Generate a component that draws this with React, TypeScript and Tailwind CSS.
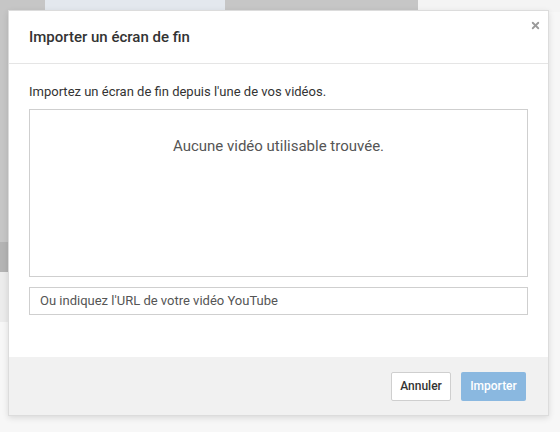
import { X } from "lucide-react";

export default function App() {
  return (
    <div
      className="relative h-[432px] w-[560px] overflow-hidden bg-[#f7f7f7]"
      style={{ fontFamily: "Roboto, 'Liberation Sans', sans-serif" }}
    >
      {/* page behind the overlay */}
      <div className="flex h-[12px]">
        <div className="w-[45px] bg-[#c6c6c6]" />
        <div className="w-[180px] bg-[#e3e8ee]" />
        <div className="w-[193px] bg-[#c6c6c6]" />
        <div className="flex-1 bg-[#f4f4f4]" />
      </div>
      <div className="flex">
        <div className="flex w-[10px] flex-col">
          <div className="h-[230px] bg-[#c6c6c6]" />
          <div className="h-[30px] bg-[#b4b4b4]" />
          <div className="h-[50px] bg-[#ececec]" />
        </div>
      </div>

      {/* dialog */}
      <div className="absolute left-[8px] top-[10px] flex h-[406px] w-[541px] flex-col border border-[#dcdcdc] bg-white shadow-[0_2px_6px_rgba(0,0,0,0.12)]">
        <div className="relative flex h-[53px] items-center border-b border-[#e5e5e5] px-[20px]">
          <h2 className="text-[15px] font-medium text-[#333]">Importer un écran de fin</h2>
          <button className="absolute right-[7px] top-[9px] text-[#9a9a9a]">
            <X size={11} strokeWidth={4} />
          </button>
        </div>

        <div className="flex flex-1 flex-col px-[20px] pt-[18px]">
          <p className="text-[13px] text-[#333]">Importez un écran de fin depuis l'une de vos vidéos.</p>
          <div className="mt-[7px] flex h-[168px] justify-center border border-[#cfcfcf] pt-[25px]">
            <span className="text-[15px] text-[#555]">Aucune vidéo utilisable trouvée.</span>
          </div>
          <input
            className="mt-[10px] h-[28px] border border-[#cfcfcf] px-[10px] text-[13px] text-[#333] outline-none placeholder:text-[#555]"
            placeholder="Ou indiquez l'URL de votre vidéo YouTube"
          />
        </div>

        <div className="flex h-[58px] items-center justify-end gap-[10px] bg-[#f1f1f1] px-[22px]">
          <button className="h-[29px] w-[60px] rounded-[2px] border border-[#cfcfcf] bg-white text-[12px] font-medium text-[#333]">
            Annuler
          </button>
          <button className="h-[29px] w-[65px] rounded-[2px] bg-[#8ab8e0] text-[12px] font-medium text-white">
            Importer
          </button>
        </div>
      </div>
    </div>
  );
}
